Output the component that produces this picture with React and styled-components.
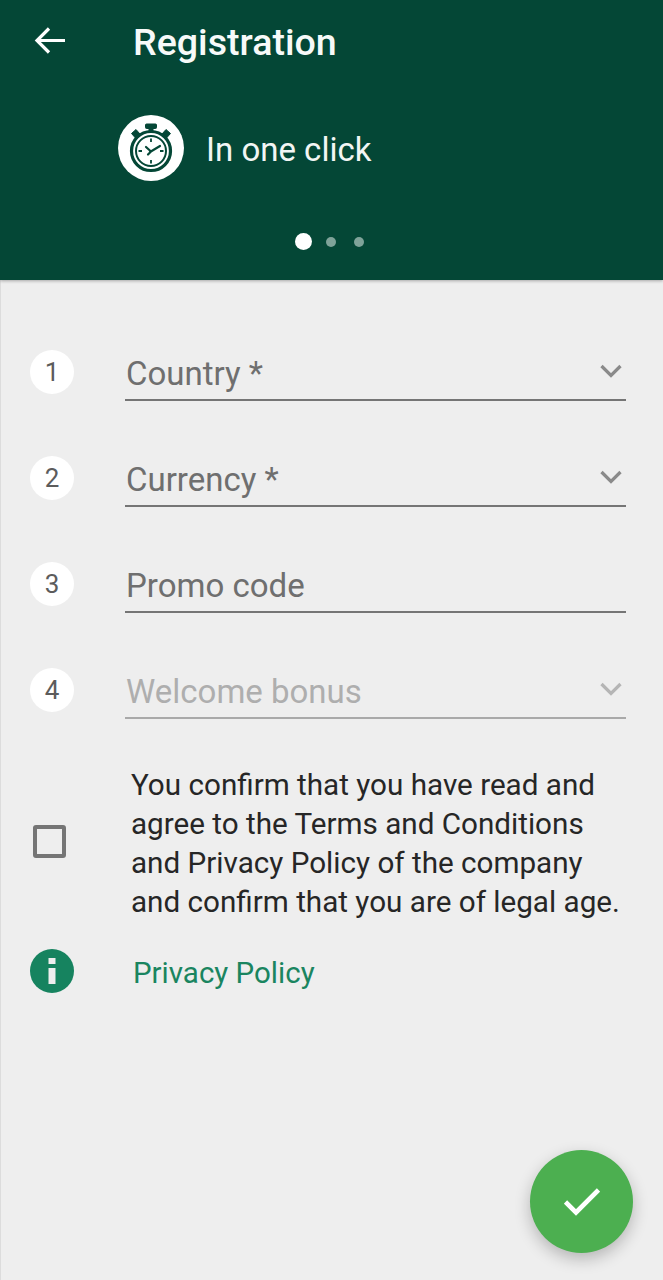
import React from "react";
import styled, { createGlobalStyle } from "styled-components";

const GlobalStyle = createGlobalStyle`
  html, body {
    margin: 0;
    padding: 0;
    background: #eeeeee;
    font-family: Roboto, "Liberation Sans", sans-serif;
  }
`;

const Page = styled.div`
  width: 663px;
  height: 1280px;
  position: relative;
  overflow: hidden;
  background: #eeeeee;
  box-sizing: border-box;
  box-shadow: inset 1px 0 0 #dcdcdc;
`;

const Header = styled.header`
  height: 280px;
  box-sizing: border-box;
  background: #044736;
  box-shadow: 0 1px 3px rgba(0, 0, 0, 0.3);
  padding-top: 20px;
  display: flex;
  flex-direction: column;
`;

const TopBar = styled.div`
  display: flex;
  align-items: center;
  height: 44px;
  padding-left: 34px;
`;

const BackIcon = styled.svg`
  width: 33px;
  height: 33px;
  margin-right: 66px;
  flex: none;
`;

const Title = styled.h1`
  margin: -1px 0 0;
  font-size: 37.6px;
  font-weight: 500;
  line-height: 44px;
  color: #f7faf9;
`;

const Slide = styled.div`
  display: flex;
  align-items: center;
  gap: 22px;
  margin-top: 51px;
  padding-left: 118px;
`;

const SlideIcon = styled.div`
  width: 66px;
  height: 66px;
  border-radius: 50%;
  background: #ffffff;
  display: flex;
  align-items: center;
  justify-content: center;
`;

const SlideText = styled.span`
  font-size: 33px;
  padding-top: 2px;
  color: #f2f6f4;
`;

const Dots = styled.div`
  display: flex;
  align-items: center;
  justify-content: center;
  margin-top: 52px;
  padding-right: 1px;
  height: 17px;
`;

const DotSlot = styled.div`
  width: 27.5px;
  display: flex;
  justify-content: center;
`;

const Dot = styled.span`
  flex: none;
  width: ${(p) => (p.$active ? 17 : 10)}px;
  height: ${(p) => (p.$active ? 17 : 10)}px;
  border-radius: 50%;
  background: ${(p) => (p.$active ? "#ffffff" : "#7fa399")};
`;

const Form = styled.main`
  padding: 65px 37px 0 30px;
`;

const FieldRow = styled.div`
  display: flex;
  align-items: flex-start;
  height: 106px;
`;

const StepBadge = styled.div`
  width: 44px;
  height: 44px;
  margin-top: 5px;
  margin-right: 51px;
  flex: none;
  border-radius: 50%;
  background: #ffffff;
  color: #5c5c5c;
  font-size: 26px;
  display: flex;
  align-items: center;
  justify-content: center;
`;

const Field = styled.div`
  flex: 1;
  height: 56px;
  box-sizing: border-box;
  border-bottom: 2px solid ${(p) => (p.$disabled ? "#a9a9a9" : "#757575")};
  display: flex;
  align-items: center;
  justify-content: space-between;
  padding: 0 4px 0 1px;
`;

const FieldLabel = styled.span`
  font-size: 33px;
  line-height: 54px;
  color: ${(p) => (p.$disabled ? "#aeaeae" : "#6f6f6f")};
  padding-top: 3px;
`;

const Chevron = styled.svg`
  width: 22px;
  height: 14px;
  margin-bottom: 2px;
  flex: none;
`;

const ConsentRow = styled.div`
  display: flex;
  align-items: center;
  margin-top: -4px;
`;

const CheckBox = styled.div`
  width: 33px;
  height: 33px;
  margin-left: 3px;
  margin-right: 65px;
  margin-bottom: 3px;
  flex: none;
  box-sizing: border-box;
  border: 4px solid #757575;
  border-radius: 3px;
`;

const ConsentText = styled.p`
  margin: 0;
  font-size: 29.65px;
  line-height: 39px;
  color: #262626;
  white-space: nowrap;
`;

const PolicyRow = styled.div`
  display: flex;
  align-items: center;
  margin-top: 28px;
`;

const InfoBadge = styled.div`
  width: 44px;
  height: 44px;
  margin-right: 59px;
  flex: none;
  border-radius: 50%;
  background: #16835f;
  display: flex;
  align-items: center;
  justify-content: center;
`;

const PolicyLink = styled.a`
  font-size: 29.5px;
  padding-top: 4px;
  color: #1a8560;
`;

const Fab = styled.button`
  position: absolute;
  left: 530px;
  top: 1150px;
  width: 103px;
  height: 103px;
  border: none;
  padding: 0;
  border-radius: 50%;
  background: #4caf50;
  box-shadow: 0 6px 16px rgba(0, 0, 0, 0.24);
  display: flex;
  align-items: center;
  justify-content: center;
`;

const Stopwatch = () => (
  <svg width="46" height="50" viewBox="0 0 46 50" fill="none" stroke="#044736">
    <rect x="17.5" y="1" width="11" height="4.5" rx="1" fill="#044736" strokeWidth="1" />
    <rect x="20.5" y="5" width="5" height="4" fill="#044736" stroke="none" />
    <path d="M3.5 10.5l4.5-4 4 4.5-4.5 4zM42.5 10.5l-4.5-4-4 4.5 4.5 4z" fill="#044736" strokeWidth="1" />
    <circle cx="23" cy="28" r="19.5" strokeWidth="3.2" />
    <circle cx="23" cy="28" r="15" strokeWidth="2" />
    <path d="M23 15.5v3.5M23 37v3.5M10.5 28H14M32 28h3.5" strokeWidth="1.8" />
    <path d="M18 24l5 4.5M22 29l10-6M23 28.5l-3 3" strokeWidth="2.2" strokeLinecap="round" />
  </svg>
);

const fields = [
  { n: 1, label: "Country *", select: true },
  { n: 2, label: "Currency *", select: true },
  { n: 3, label: "Promo code" },
  { n: 4, label: "Welcome bonus", select: true, disabled: true },
];

export default function App() {
  return (
    <Page>
      <GlobalStyle />
      <Header>
        <TopBar>
          <BackIcon viewBox="0 0 33 33" fill="none" stroke="#ffffff" strokeWidth="3.2">
            <path d="M31 14.5H4M15 2.5L3 14.5l12 12" />
          </BackIcon>
          <Title>Registration</Title>
        </TopBar>
        <Slide>
          <SlideIcon>
            <Stopwatch />
          </SlideIcon>
          <SlideText>In one click</SlideText>
        </Slide>
        <Dots>
          <DotSlot>
            <Dot $active />
          </DotSlot>
          <DotSlot>
            <Dot />
          </DotSlot>
          <DotSlot>
            <Dot />
          </DotSlot>
        </Dots>
      </Header>
      <Form>
        {fields.map((f) => (
          <FieldRow key={f.n}>
            <StepBadge>{f.n}</StepBadge>
            <Field $disabled={f.disabled}>
              <FieldLabel $disabled={f.disabled}>{f.label}</FieldLabel>
              {f.select && (
                <Chevron viewBox="0 0 22 14" fill="none" stroke={f.disabled ? "#b5b5b5" : "#8a8a8a"} strokeWidth="3.2">
                  <path d="M1.5 2l9.5 9.5L20.5 2" />
                </Chevron>
              )}
            </Field>
          </FieldRow>
        ))}
        <ConsentRow>
          <CheckBox />
          <ConsentText>
            You confirm that you have read and
            <br />
            agree to the Terms and Conditions
            <br />
            and Privacy Policy of the company
            <br />
            and confirm that you are of legal age.
          </ConsentText>
        </ConsentRow>
        <PolicyRow>
          <InfoBadge>
            <svg width="8" height="26" viewBox="0 0 8 26" fill="#eeeeee">
              <rect x="0.5" y="0" width="7" height="6" />
              <rect x="0.5" y="10" width="7" height="16" />
            </svg>
          </InfoBadge>
          <PolicyLink>Privacy Policy</PolicyLink>
        </PolicyRow>
      </Form>
      <Fab>
        <svg width="36" height="28" viewBox="0 0 36 28" fill="none" stroke="#ffffff" strokeWidth="4.6">
          <path d="M1.5 14l10.5 10.5L34.5 2" />
        </svg>
      </Fab>
    </Page>
  );
}
